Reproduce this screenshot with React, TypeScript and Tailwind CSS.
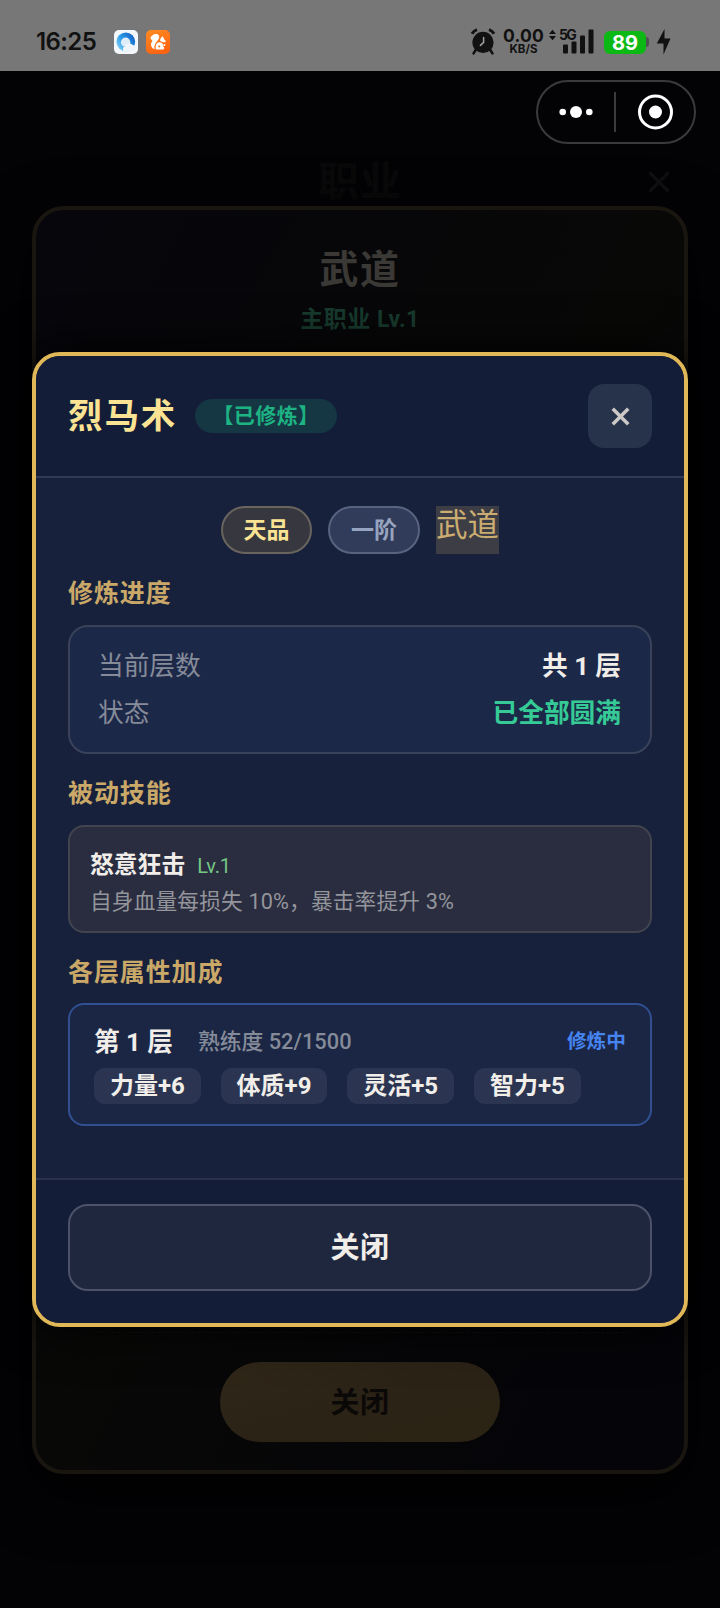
import { clsx } from "clsx";
import { X } from "lucide-react";

const PROGRESS = [
  { label: "当前层数", value: "共 1 层", tone: "text-[#f1eeea]" },
  { label: "状态", value: "已全部圆满", tone: "text-[#36cb96]" },
];

const BONUSES = ["力量+6", "体质+9", "灵活+5", "智力+5"];

function AlarmIcon() {
  return (
    <svg width="26" height="28" viewBox="0 0 26 28" className="text-[#111]">
      <path d="M6 21.5 3.6 25.4M20 21.5l2.4 3.9" stroke="currentColor" strokeWidth="2.6" strokeLinecap="round" />
      <path d="M2 5.800a9 9 0 0 1 5-4.200M24 5.800a9 9 0 0 0-5-4.200" stroke="currentColor" strokeWidth="3" fill="none" />
      <circle cx="13" cy="14.4" r="10.6" fill="currentColor" />
      <path d="M13.6 9.400v5l-3.200 3" stroke="#a0a0a0" strokeWidth="1.5" fill="none" strokeLinecap="round" />
    </svg>
  );
}

function SignalIcon() {
  return (
    <div className="relative w-[45px] h-[26px]">
      <svg width="45" height="26" viewBox="0 0 45 26" fill="#111">
        <path d="M0 5 3.5 0.8 7 5zM0 7 3.5 11.2 7 7z" />
        <rect x="14" y="15.5" width="5" height="9" rx="1" />
        <rect x="22.500" y="12.500" width="5" height="12" rx="1" />
        <rect x="31" y="6.500" width="5" height="18" rx="1" />
        <rect x="39.500" y="0.500" width="5" height="24" rx="1" />
      </svg>
      <span className="absolute left-[10px] -top-px text-[14px] leading-[14px] font-bold tracking-[-1.800px] text-[#111]">5G</span>
    </div>
  );
}

function StatusBar() {
  return (
    <header className="h-[71px] shrink-0 flex items-start bg-[#777] pt-7 pl-[36px] pr-[49px] font-[Inter,sans-serif]">
      <span className="w-[78px] text-[24px] leading-[27px] font-semibold tracking-[-0.600px] text-[#111]">16:25</span>
      <svg width="24" height="24" viewBox="0 0 24 24" className="mt-[2px]">
        <defs>
          <linearGradient id="ring" x1="0" y1="1" x2="1" y2="0.3">
            <stop offset="0" stopColor="#9fe0fc" />
            <stop offset="0.5" stopColor="#2a9ce9" />
            <stop offset="1" stopColor="#1766c9" />
          </linearGradient>
        </defs>
        <rect width="24" height="24" rx="5" fill="#f5f8fb" />
        <circle cx="11.800" cy="11.800" r="9.400" fill="url(#ring)" />
        <circle cx="11.600" cy="12.200" r="4.700" fill="#dfedf9" />
        <path d="M9.500 21.600a3.600 3.600 0 0 1 2-5.600 4 4 0 0 1 6.900-1.200 4 4 0 0 1 3.200 3.700 4 4 0 0 1-3.600 3.100z" fill="#eff5fb" />
      </svg>
      <svg width="24" height="24" viewBox="0 0 24 24" className="mt-[2px] ml-2">
        <defs>
          <linearGradient id="uc" x1="0" y1="0" x2="0.4" y2="1">
            <stop offset="0" stopColor="#ff8c22" />
            <stop offset="1" stopColor="#ff6412" />
          </linearGradient>
        </defs>
        <rect width="24" height="24" rx="5" fill="url(#uc)" />
        {/* tail, body and head of the squirrel */}
        <path
          d="M8.600 19.400C5.200 17.800 4 14.600 6 11.800c.6-.8.4-1.400-.4-2C4 8.600 4.200 6.200 6.200 5.800 7.400 3.600 11.400 3.200 12.800 5.400c1 1.800.2 3.400-1 4.800-2.200 2.600-4 5-3.200 9.200z"
          fill="#fff"
        />
        <path d="M10 19.400c-1-3.200.2-6.800 3.200-7.200 2.400-.2 4 1.600 4 3.800 0 .8.400 1.200 1 1.600.4 1-.4 1.800-1.200 1.800z" fill="#fff" />
        <path d="M16.400 6.200c1 1 1.600 2 1.900 3.200 1.700.6 2 2.600.5 2.800-1.800.2-3.600-.6-4.800-1.800.2-1.600 1.200-3 2.400-4.200z" fill="#fff" />
        <circle cx="18.400" cy="15" r="1" fill="#fff" />
        <circle cx="13.200" cy="16.600" r="1" fill="#ff7a1a" />
      </svg>

      <div className="ml-auto flex items-start">
        <AlarmIcon />
        <div className="ml-[7px] w-[41px] flex flex-col items-center text-[#111]">
          <span className="text-[17.500px] leading-[16px] tracking-[0.200px] font-bold">0.00</span>
          <span className="text-[11.500px] leading-[10px] font-bold">KB/S</span>
        </div>
        <div className="ml-[5px] mt-px">
          <SignalIcon />
        </div>
        <div className="ml-[10px] mt-[2.500px] w-[42px] h-[23px] rounded-[6px] bg-[#0cb914] text-center text-white text-[20px] leading-[24px] font-bold">89</div>
        <div className="mt-[9px] w-[3px] h-[10px] rounded-r-full bg-[#505050]" />
        <svg width="15" height="27" viewBox="0 0 15 27" className="ml-[7px]" fill="#111">
          <path d="M8.500 1v9.500h6L7.500 26.500V15.500H0.800z" />
        </svg>
      </div>
    </header>
  );
}

function CapsuleMenu() {
  return (
    <div className="mt-[9px] mr-6 self-end w-[160px] h-16 shrink-0 flex items-center rounded-full border-2 border-[#3b3b3c]">
      <svg width="76" height="40" viewBox="0 0 76 40" fill="#fff">
        <circle cx="24.700" cy="20" r="3.300" />
        <circle cx="38" cy="20" r="6" />
        <circle cx="51.300" cy="20" r="3.300" />
      </svg>
      <div className="w-[2px] h-10 bg-[#3b3b3c]" />
      <svg width="77" height="40" viewBox="0 0 77 40">
        <circle cx="39.500" cy="20" r="16" fill="none" stroke="#fff" strokeWidth="3" />
        <circle cx="39.500" cy="20" r="6.500" fill="#fff" />
      </svg>
    </div>
  );
}

function ProfessionPage() {
  return (
    <div className="flex-1 flex flex-col">
      <div className="h-[62px] px-[44px] pt-2 grid grid-cols-[1fr_auto_1fr] items-center">
        <span />
        <h1 className="text-[41px] leading-[60px] tracking-[1px] font-bold text-[#0a0909]">职业</h1>
        <X className="justify-self-end w-[34px] h-[34px] text-[#0f0f11]" strokeWidth={2.500} />
      </div>

      <div className="mx-8 h-[1268px] flex flex-col items-center rounded-[32px] border-4 border-[#191610] bg-linear-to-br from-[#06060c] via-[#080807] to-[#040409] shadow-[0_20px_60px_#000]">
        <h2 className="mt-[32px] text-[39px] leading-[56px] tracking-[1.500px] font-bold text-[#3b3935]">武道</h2>
        <p className="mt-[6px] text-[23px] leading-[32px] tracking-[0.500px] font-bold text-[#183b2e]">主职业 Lv.1</p>
        <div className="mt-auto self-stretch mx-10 h-10 rounded-b-[20px] border-b border-dashed border-[#111110]" />
        <button className="mt-[29px] mb-7 w-[280px] h-20 rounded-full bg-linear-to-br from-[#302719] via-[#2b2316] to-[#2b2414] pt-[3px] text-[29px] tracking-[0.500px] font-bold text-[#0b0908]">
          关闭
        </button>
      </div>
    </div>
  );
}

function SectionTitle({ children }: { children: React.ReactNode }) {
  return <h3 className="mt-[21px] h-9 pt-px text-[25px] leading-9 tracking-[0.900px] font-bold text-[#caa868]">{children}</h3>;
}

function SkillModal() {
  return (
    <div className="w-[656px] h-[975px] flex flex-col overflow-hidden rounded-[28px] border-4 border-[#e0b858] bg-[#17213c] shadow-[0_0_50px_#000]">
      <div className="h-[122px] shrink-0 px-8 flex items-center border-b-2 border-[#313953] bg-[#141d37]">
        <h2 className="text-[34.500px] leading-[52px] tracking-[1.900px] font-bold text-[#fbe394]">烈马术</h2>
        <span className="ml-[18px] w-[141.500px] h-[34px] rounded-full bg-[#153743] text-center text-[21px] leading-[35px] tracking-[0.400px] font-bold text-[#1db383]">
          【已修炼】
        </span>
        <button className="ml-auto w-16 h-16 rounded-2xl bg-[#27324b] flex items-center justify-center" aria-label="关闭">
          <X className="w-[31px] h-[31px] mt-px text-[#ccc9c7]" strokeWidth={2.700} strokeLinecap="butt" />
        </button>
      </div>

      <div className="flex-1 px-8 pt-7">
        <div className="flex justify-center gap-4">
          <span className="w-[91px] h-12 rounded-full border-2 border-[#69645d] bg-[#36373f] text-center text-[23px] leading-[46px] font-bold text-[#fbe394]">天品</span>
          <span className="w-[92px] h-12 rounded-full border-2 border-[#57637f] bg-[#313c5a] text-center text-[23px] leading-[46px] font-bold text-[#97a4c0]">一阶</span>
          <span className="w-[63px] h-12 bg-[#3d3d45] text-[31.500px] leading-[39px] text-[#cbac71]">武道</span>
        </div>

        <SectionTitle>修炼进度</SectionTitle>
        <div className="mt-[14px] h-[129px] px-7 pt-4 rounded-[20px] border-2 border-[#3a4259] bg-[#1c2848]">
          {PROGRESS.map(row => (
            <div key={row.label} className="h-[46.500px] flex items-center justify-between text-[25.700px] leading-[46px]">
              <span className="text-[#868b99]">{row.label}</span>
              <span className={clsx("mr-px font-bold", row.tone)}>{row.value}</span>
            </div>
          ))}
        </div>

        <SectionTitle>被动技能</SectionTitle>
        <div className="mt-[14px] h-[108px] px-5 pt-5 rounded-2xl border-2 border-[#42444e] bg-[#2a2d40]">
          <div className="flex items-center gap-3 h-9">
            <span className="text-[23.800px] leading-9 font-bold text-[#f1eeea]">怒意狂击</span>
            <span className="mt-[2px] text-[20px] leading-9 tracking-[-0.300px] text-[#75c785]">Lv.1</span>
          </div>
          <p className="mt-px text-[21.700px] leading-9 tracking-[0.150px] text-[#94959b]">自身血量每损失 10%，暴击率提升 3%</p>
        </div>

        <SectionTitle>各层属性加成</SectionTitle>
        <div className="mt-[13px] h-[123px] px-6 pt-[19px] rounded-2xl border-2 border-[#305092] bg-[#1a2644]">
          <div className="flex items-center h-9">
            <span className="text-[25.700px] leading-9 font-bold text-[#f1eeea]">第 1 层</span>
            <span className="ml-[25px] text-[21.800px] leading-9 font-medium text-[#858b98]">熟练度 52/1500</span>
            <span className="ml-auto text-[19.700px] leading-9 font-bold text-[#4684f0]">修炼中</span>
          </div>
          <div className="mt-[8px] flex gap-5">
            {BONUSES.map(bonus => (
              <span key={bonus} className="w-[106.700px] h-9 rounded-[11px] bg-[#2b3552] text-center text-[24px] leading-9 font-bold text-[#f1eeea]">
                {bonus}
              </span>
            ))}
          </div>
        </div>
      </div>

      <div className="h-[145px] shrink-0 px-8 pt-6 border-t-2 border-[#2b314c] bg-[#141d37]">
        <button className="w-full h-[87px] rounded-[20px] border-2 border-[#4c5368] bg-[#1f273e] pt-[3px] text-[29px] tracking-[0.500px] font-bold text-[#f1eeea]">
          关闭
        </button>
      </div>
    </div>
  );
}

export default function App() {
  return (
    <div className="w-[720px] h-[1608px] overflow-hidden flex flex-col bg-[#030306] font-[Roboto,'Noto_Sans_CJK_SC',sans-serif]">
      <StatusBar />
      <main className="relative flex-1 flex flex-col">
        <CapsuleMenu />
        <ProfessionPage />
        <div className="absolute inset-0 flex items-center justify-center">
          <SkillModal />
        </div>
      </main>
    </div>
  );
}
